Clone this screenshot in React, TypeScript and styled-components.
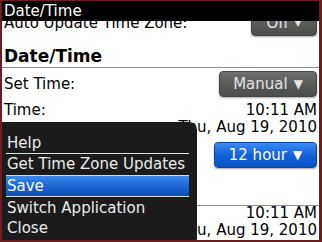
import React from "react";
import styled, { createGlobalStyle } from "styled-components";

const GlobalStyle = createGlobalStyle`
  html, body {
    margin: 0;
    padding: 0;
    background: #ffffff;
  }
  body {
    font-family: "DejaVu Sans", "Liberation Sans", sans-serif;
    font-size: 15px;
  }
`;

const menuItems = [
  { label: "Help", divider: true },
  { label: "Get Time Zone Updates" },
  { label: "Save", selected: true },
  { label: "Switch Application" },
  { label: "Close" },
];

const App: React.FC = () => {
  return (
    <>
      <GlobalStyle />
      <Frame>
        <TitleBar>Date/Time</TitleBar>
        <Body>
          <Content>
            <Row $h={28}>
              <Label>Auto Update Time Zone:</Label>
              <ChoiceButton $w={66}>
                Off <Arrow $small>▼</Arrow>
              </ChoiceButton>
            </Row>
            <Heading>Date/Time</Heading>
            <Row $h={32}>
              <Label>Set Time:</Label>
              <ChoiceButton $w={98}>
                Manual <Arrow>▼</Arrow>
              </ChoiceButton>
            </Row>
            <ValueRow $top={2}>
              <Label>Time:</Label>
              <Values>
                <span>10:11 AM</span>
                <span>Thu, Aug 19, 2010</span>
              </Values>
            </ValueRow>
            <Row $h={38}>
              <Label>Time Format:</Label>
              <ChoiceButton $w={103} $blue>
                12 hour <Arrow>▼</Arrow>
              </ChoiceButton>
            </Row>
            <Heading $top={1}>Network Time</Heading>
            <ValueRow $top={-1}>
              <Label>Time:</Label>
              <Values>
                <span>10:11 AM</span>
                <span>Thu, Aug 19, 2010</span>
              </Values>
            </ValueRow>
          </Content>
        </Body>
        <Menu>
          {menuItems.map((item) => (
            <MenuItem
              key={item.label}
              $selected={item.selected}
              $divider={item.divider}
            >
              {item.label}
            </MenuItem>
          ))}
        </Menu>
      </Frame>
    </>
  );
};

export default App;

const Frame = styled.div`
  position: relative;
  width: 322px;
  height: 242px;
  box-sizing: border-box;
  border: 2px solid #6b1d24;
  border-top-width: 1px;
  border-right-width: 3px;
  background: #ffffff;
  display: flex;
  flex-direction: column;
  overflow: hidden;
  color: #000000;
`;

const TitleBar = styled.div`
  height: 20px;
  flex: none;
  background: #000000;
  color: #ffffff;
  font-size: 15px;
  line-height: 20px;
  padding-left: 2px;
  position: relative;
  z-index: 1;
`;

const Body = styled.div`
  flex: 1;
  overflow: hidden;
`;

const Content = styled.div`
  margin-top: -12px;
  display: flex;
  flex-direction: column;
`;

const Row = styled.div<{ $h: number }>`
  height: ${(p) => p.$h}px;
  display: flex;
  align-items: center;
  justify-content: space-between;
  padding: 0 2px 0 2px;
`;

const Label = styled.span`
  font-size: 15px;
  line-height: 17px;
`;

const Heading = styled.div<{ $top?: number }>`
  height: 31px;
  margin-top: ${(p) => p.$top ?? 0}px;
  box-sizing: border-box;
  display: flex;
  align-items: flex-end;
  padding: 0 2px 1px;
  font-size: 17px;
  font-weight: bold;
  line-height: 20px;
  border-bottom: 1px solid #8c8c8c;
`;

const ChoiceButton = styled.div<{ $w: number; $blue?: boolean }>`
  width: ${(p) => p.$w}px;
  height: 26px;
  box-sizing: border-box;
  border-radius: 4px;
  display: flex;
  align-items: center;
  justify-content: center;
  gap: 6px;
  font-size: 15px;
  color: ${(p) => (p.$blue ? "#ffffff" : "#e4e4e4")};
  background: ${(p) =>
    p.$blue
      ? "linear-gradient(#3b8af0, #1060d8 55%, #0a52c4)"
      : "linear-gradient(#6e706e, #585a58 55%, #4c4e4c)"};
  border: 1px solid ${(p) => (p.$blue ? "#0a48a8" : "#444644")};
  box-shadow: 0 1px 2px rgba(0, 0, 0, 0.35);
`;

const Arrow = styled.span<{ $small?: boolean }>`
  font-size: ${(p) => (p.$small ? 9 : 12)}px;
`;

const ValueRow = styled.div<{ $top: number }>`
  display: flex;
  justify-content: space-between;
  align-items: flex-start;
  padding: 0 2px;
  margin-top: ${(p) => p.$top}px;
`;

const Values = styled.div`
  display: flex;
  flex-direction: column;
  align-items: flex-end;
  font-size: 15px;
  line-height: 17px;
`;

const Menu = styled.div`
  position: absolute;
  left: 0;
  top: 121px;
  bottom: 0;
  width: 195px;
  background: #1b1b1b;
  border-top-right-radius: 8px;
  padding: 11px 8px 0 4px;
  box-sizing: border-box;
  z-index: 2;
`;

const MenuItem = styled.div<{ $selected?: boolean; $divider?: boolean }>`
  height: 20px;
  line-height: 20px;
  padding-left: 1px;
  font-size: 15px;
  color: #ececec;
  white-space: nowrap;
  border-bottom: ${(p) => (p.$divider ? "1px solid #e0e0e0" : "none")};
  ${(p) =>
    p.$selected &&
    `
    height: 20px;
    margin: 1px 0;
    color: #ffffff;
    background: linear-gradient(#3d88ec, #1a62d4 55%, #0c4cb0);
    border-top: 1px solid #d8d8d8;
    border-bottom: 1px solid #d8d8d8;
  `}
`;
